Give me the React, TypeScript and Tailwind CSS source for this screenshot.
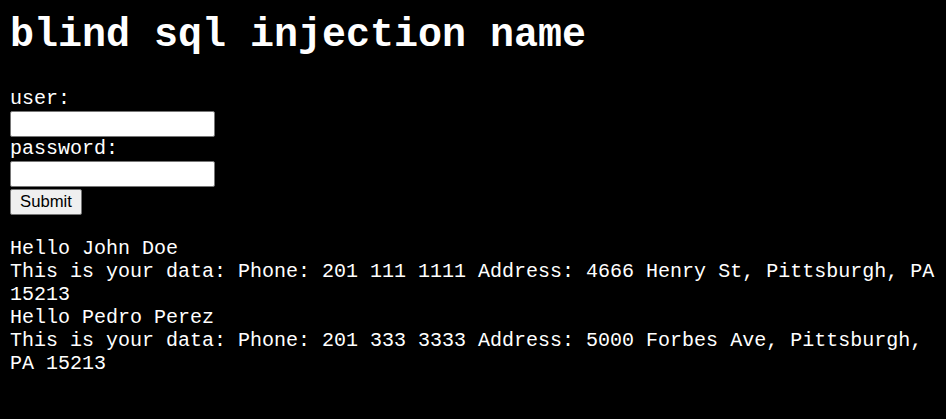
const users = [
  {
    name: "John Doe",
    data: "Phone: 201 111 1111 Address: 4666 Henry St, Pittsburgh, PA 15213",
  },
  {
    name: "Pedro Perez",
    data: "Phone: 201 333 3333 Address: 5000 Forbes Ave, Pittsburgh, PA 15213",
  },
];

const App = () => {
  return (
    <div className="min-h-screen bg-black px-[10px] pt-[13px] font-['Liberation_Mono','Courier_New',monospace] text-[20px] leading-[23px] text-white">
      <h1 className="text-[40px] leading-[45px] font-bold">blind sql injection name</h1>

      <form className="mt-[29px] flex flex-col items-start" onSubmit={(e) => e.preventDefault()}>
        <label htmlFor="user">user:</label>
        <input
          id="user"
          type="text"
          className="mt-[1px] h-[26px] w-[205px] rounded-[2px] border border-[#767676] bg-white px-1 text-[16px] text-black"
        />
        <label htmlFor="password">password:</label>
        <input
          id="password"
          type="password"
          className="mt-[1px] h-[26px] w-[205px] rounded-[2px] border border-[#767676] bg-white px-1 text-[16px] text-black"
        />
        <button
          type="submit"
          className="mt-[2px] h-[26px] w-[72px] rounded-[2px] border border-[#767676] bg-[#efefef] font-['Liberation_Sans',Arial,sans-serif] text-[16.67px] leading-[20px] text-black"
        >
          Submit
        </button>
      </form>

      <div className="mt-[22px]">
        {users.map((user) => (
          <div key={user.name}>
            <p>Hello {user.name}</p>
            <p>This is your data: {user.data}</p>
          </div>
        ))}
      </div>
    </div>
  );
};

export default App;
